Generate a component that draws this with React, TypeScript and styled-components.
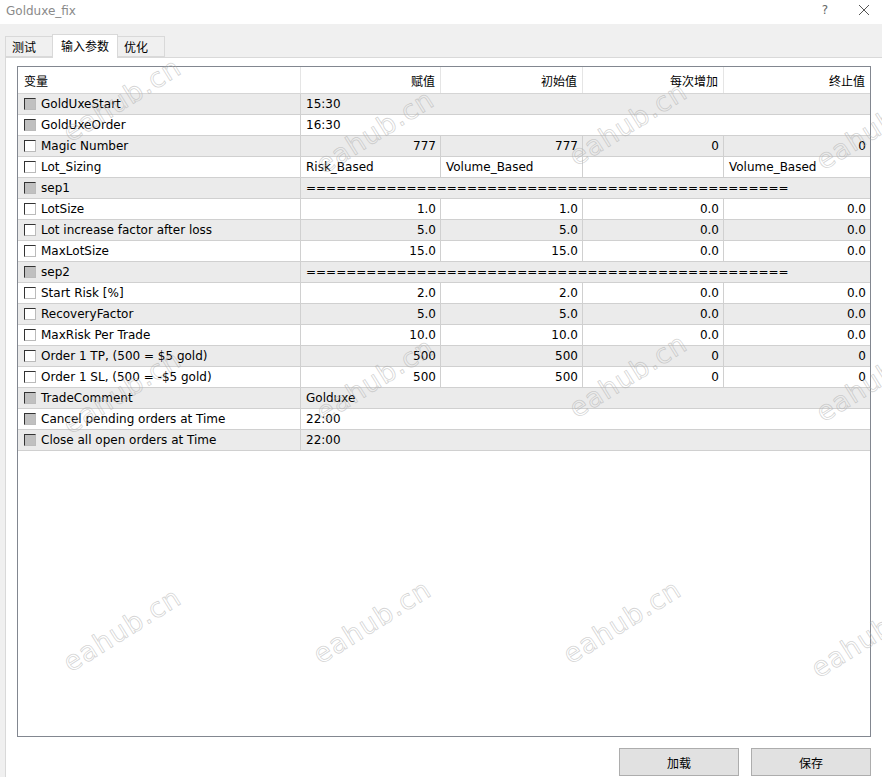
import React from "react";
import styled, { createGlobalStyle } from "styled-components";

const GlobalStyle = createGlobalStyle`
  html, body {
    margin: 0;
    padding: 0;
    background: #ffffff;
  }
  body {
    font-family: "DejaVu Sans", "Noto Sans CJK SC", sans-serif;
    font-size: 12px;
    color: #000;
  }
`;

type Row = {
  name: string;
  locked?: boolean;
  values: string[];
  align?: "left" | "right";
};

const SEP = "=".repeat(48);

const rows: Row[] = [
  { name: "GoldUxeStart", locked: true, values: ["15:30"], align: "left" },
  { name: "GoldUxeOrder", locked: true, values: ["16:30"], align: "left" },
  { name: "Magic Number", values: ["777", "777", "0", "0"] },
  { name: "Lot_Sizing", values: ["Risk_Based", "Volume_Based", "", "Volume_Based"], align: "left" },
  { name: "sep1", locked: true, values: [SEP], align: "left" },
  { name: "LotSize", values: ["1.0", "1.0", "0.0", "0.0"] },
  { name: "Lot increase factor after loss", values: ["5.0", "5.0", "0.0", "0.0"] },
  { name: "MaxLotSize", values: ["15.0", "15.0", "0.0", "0.0"] },
  { name: "sep2", locked: true, values: [SEP], align: "left" },
  { name: "Start Risk [%]", values: ["2.0", "2.0", "0.0", "0.0"] },
  { name: "RecoveryFactor", values: ["5.0", "5.0", "0.0", "0.0"] },
  { name: "MaxRisk Per Trade", values: ["10.0", "10.0", "0.0", "0.0"] },
  { name: "Order 1 TP, (500 = $5 gold)", values: ["500", "500", "0", "0"] },
  { name: "Order 1 SL, (500 = -$5 gold)", values: ["500", "500", "0", "0"] },
  { name: "TradeComment", locked: true, values: ["Golduxe"], align: "left" },
  { name: "Cancel pending orders at Time", locked: true, values: ["22:00"], align: "left" },
  { name: "Close all open orders at Time", locked: true, values: ["22:00"], align: "left" },
];

// watermark tiles over the whole dialog
const marks = [
  { x: 122, y: 100 }, { x: 375, y: 132 }, { x: 628, y: 124 }, { x: 875, y: 128 },
  { x: 122, y: 392 }, { x: 375, y: 380 }, { x: 628, y: 376 }, { x: 875, y: 380 },
  { x: 122, y: 630 }, { x: 372, y: 622 }, { x: 622, y: 622 }, { x: 870, y: 636 },
];

const App = () => {
  return (
    <>
      <GlobalStyle />
      <Window>
        <TitleBar>
          <Title>Golduxe_fix</Title>
          <TitleButtons>
            <TitleGlyph>?</TitleGlyph>
            <TitleGlyph>
              <svg width="12" height="12" viewBox="0 0 12 12">
                <path d="M1 1 L11 11 M11 1 L1 11" stroke="#555" strokeWidth="1" fill="none" />
              </svg>
            </TitleGlyph>
          </TitleButtons>
        </TitleBar>

        <TabStrip>
          <Tab>测试</Tab>
          <Tab $active>输入参数</Tab>
          <Tab>优化</Tab>
        </TabStrip>

        <Panel>
          <Grid>
            <HeaderRow>
              <HeadCell $align="left">变量</HeadCell>
              <HeadCell>赋值</HeadCell>
              <HeadCell>初始值</HeadCell>
              <HeadCell>每次增加</HeadCell>
              <HeadCell $last>终止值</HeadCell>
            </HeaderRow>
            {rows.map((r, i) => (
              <DataRow key={r.name} $shaded={i % 2 === 0}>
                <NameCell>
                  <Check $locked={r.locked} />
                  {r.name}
                </NameCell>
                {r.values.length === 1 ? (
                  <ValueCell $align="left" $span={4} $last>
                    {r.values[0]}
                  </ValueCell>
                ) : (
                  r.values.map((v, j) => (
                    <ValueCell key={j} $align={r.align ?? "right"} $last={j === 3}>
                      {v}
                    </ValueCell>
                  ))
                )}
              </DataRow>
            ))}
          </Grid>

          <Buttons>
            <Button>加载</Button>
            <Button>保存</Button>
          </Buttons>
        </Panel>

        {marks.map((m, i) => (
          <Watermark key={i} style={{ left: m.x - 85, top: m.y - 16 }}>
            eahub.cn
          </Watermark>
        ))}
      </Window>
    </>
  );
};

const Window = styled.div`
  position: relative;
  width: 882px;
  height: 777px;
  display: flex;
  flex-direction: column;
  background: #f0f0f0;
  overflow: hidden;
`;

const TitleBar = styled.div`
  height: 24px;
  flex: 0 0 24px;
  display: flex;
  align-items: center;
  justify-content: space-between;
  background: #ffffff;
  padding-left: 6px;
`;

const Title = styled.div`
  font-size: 12px;
  color: #8a8a8a;
  margin-top: -3px;
`;

const TitleButtons = styled.div`
  display: flex;
  align-items: center;
  gap: 30px;
  padding-right: 12px;
  margin-top: -4px;
`;

const TitleGlyph = styled.span`
  display: flex;
  align-items: center;
  color: #666;
  font-size: 12px;
`;

const TabStrip = styled.div`
  height: 33px;
  flex: 0 0 33px;
  display: flex;
  align-items: flex-end;
  padding-left: 5px;
  font-family: "Noto Sans CJK SC", sans-serif;
`;

const Tab = styled.div<{ $active?: boolean }>`
  height: ${(p) => (p.$active ? "24px" : "21px")};
  box-sizing: border-box;
  display: flex;
  align-items: ${(p) => (p.$active ? "flex-start" : "center")};
  padding: ${(p) => (p.$active ? "2px 8px 0" : "0 6px")};
  margin-bottom: ${(p) => (p.$active ? "-1px" : "0")};
  background: ${(p) => (p.$active ? "#ffffff" : "#f0f0f0")};
  border: 1px solid #d9d9d9;
  border-bottom: ${(p) => (p.$active ? "none" : "1px solid #d9d9d9")};
  margin-left: ${(p) => (p.$active ? "-1px" : "0")};
  margin-right: ${(p) => (p.$active ? "-1px" : "0")};
  position: relative;
  z-index: ${(p) => (p.$active ? 1 : 0)};
  font-size: 12px;
  min-width: 48px;
  justify-content: flex-start;
`;

const Panel = styled.div`
  flex: 1;
  display: flex;
  flex-direction: column;
  margin-left: 5px;
  background: #ffffff;
  border-left: 1px solid #d9d9d9;
  border-top: 1px solid #d9d9d9;
  padding: 8px 10px 0 11px;
`;

const Grid = styled.div`
  width: 854px;
  height: 671px;
  box-sizing: border-box;
  border: 1px solid #828790;
  background: #ffffff;
  display: flex;
  flex-direction: column;
`;

const columns = "283px 140px 142px 141px 1fr";

const HeaderRow = styled.div`
  display: grid;
  grid-template-columns: ${columns};
  height: 26px;
  border-bottom: 1px solid #d5d5d5;
`;

const HeadCell = styled.div<{ $align?: "left" | "right"; $last?: boolean }>`
  display: flex;
  align-items: center;
  justify-content: ${(p) => (p.$align === "left" ? "flex-start" : "flex-end")};
  padding: 0 5px 0 6px;
  border-right: ${(p) => (p.$last ? "none" : "1px solid #e5e5e5")};
  font-family: "Noto Sans CJK SC", sans-serif;
  font-size: 12px;
`;

const DataRow = styled.div<{ $shaded?: boolean }>`
  display: grid;
  grid-template-columns: ${columns};
  height: 21px;
  box-sizing: border-box;
  border-bottom: 1px solid #d0d0d0;
  background: ${(p) => (p.$shaded ? "#ebebeb" : "#ffffff")};
`;

const NameCell = styled.div`
  display: flex;
  align-items: center;
  gap: 5px;
  padding-left: 6px;
  border-right: 1px solid #d0d0d0;
  white-space: nowrap;
`;

const Check = styled.span<{ $locked?: boolean }>`
  width: 12px;
  height: 12px;
  box-sizing: border-box;
  border: 1px solid #333;
  border-right-color: #bbb;
  border-bottom-color: #bbb;
  background: ${(p) => (p.$locked ? "#c0c0c0" : "#ffffff")};
  flex: 0 0 12px;
`;

const ValueCell = styled.div<{ $align?: "left" | "right"; $span?: number; $last?: boolean }>`
  grid-column: ${(p) => (p.$span ? `span ${p.$span}` : "auto")};
  display: flex;
  align-items: center;
  justify-content: ${(p) => (p.$align === "left" ? "flex-start" : "flex-end")};
  padding: 0 4px 0 5px;
  border-right: ${(p) => (p.$last ? "none" : "1px solid #d0d0d0")};
  white-space: nowrap;
  overflow: hidden;
`;

const Buttons = styled.div`
  display: flex;
  justify-content: flex-end;
  gap: 12px;
  margin-top: 11px;
  width: 854px;
`;

const Button = styled.button`
  width: 120px;
  height: 28px;
  background: #e1e1e1;
  border: 1px solid #adadad;
  font-family: "Noto Sans CJK SC", sans-serif;
  font-size: 12px;
  color: #000;
  padding: 0;
`;

const Watermark = styled.div`
  position: absolute;
  width: 170px;
  text-align: center;
  transform: rotate(-32deg);
  font-family: "DejaVu Sans", sans-serif;
  font-size: 27px;
  letter-spacing: 1px;
  color: transparent;
  -webkit-text-stroke: 0.8px rgba(175, 175, 175, 0.55);
  pointer-events: none;
  white-space: nowrap;
`;

export default App;
